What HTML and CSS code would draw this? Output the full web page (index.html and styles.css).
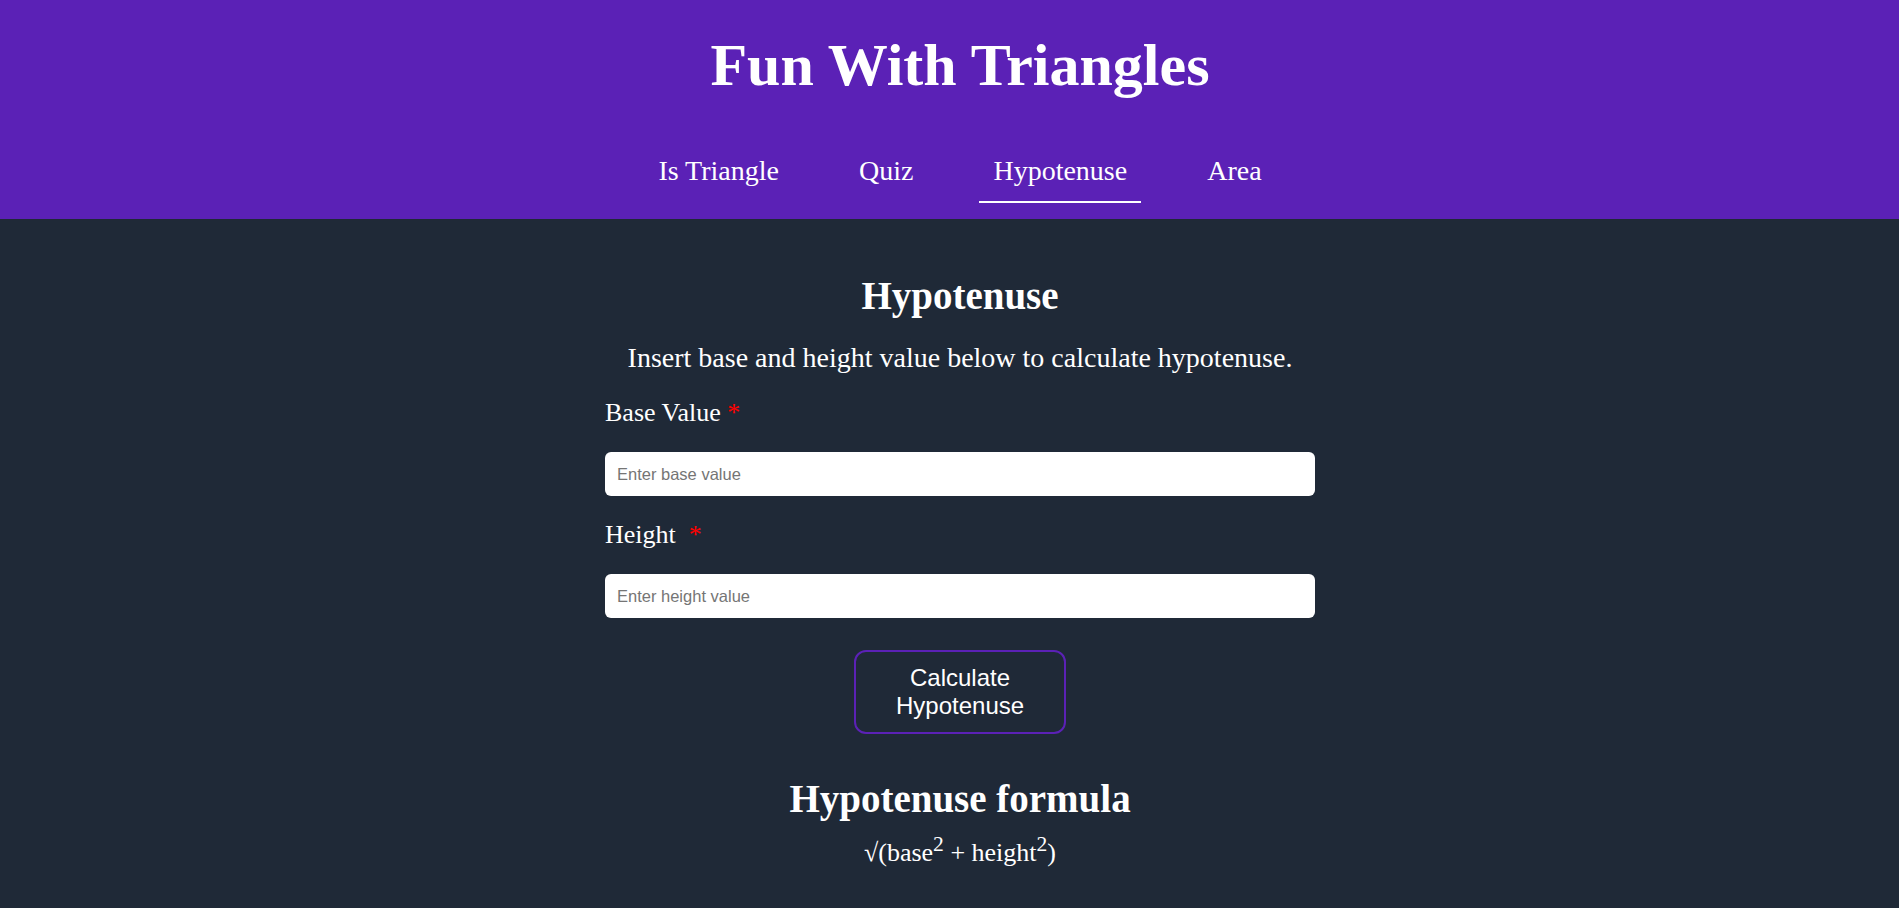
FILE: index.html
```html
<!DOCTYPE html>
<html lang="en">
<head>
<meta charset="utf-8">
<title>Fun With Triangles</title>
<link rel="stylesheet" href="styles.css">
</head>
<body>
<header class="site-header">
  <div class="header-inner">
    <h1 class="site-title">Fun With Triangles</h1>
    <nav class="nav">
      <a class="nav-link" href="#">Is Triangle</a>
      <a class="nav-link" href="#">Quiz</a>
      <a class="nav-link active" href="#">Hypotenuse</a>
      <a class="nav-link" href="#">Area</a>
    </nav>
  </div>
</header>
<main class="main">
  <section class="panel">
    <h2 class="heading">Hypotenuse</h2>
    <p class="intro">Insert base and height value below to calculate hypotenuse.</p>
    <form class="form">
      <label class="label" for="base">Base Value <span class="req">*</span></label>
      <input class="field" id="base" type="number" placeholder="Enter base value">
      <label class="label label-2" for="height">Height&nbsp; <span class="req">*</span></label>
      <input class="field" id="height" type="number" placeholder="Enter height value">
      <button class="btn" type="button">Calculate Hypotenuse</button>
    </form>
    <h2 class="heading formula-heading">Hypotenuse formula</h2>
    <p class="formula">√(base<sup>2</sup> + height<sup>2</sup>)</p>
  </section>
</main>
</body>
</html>
```

FILE: styles.css
```css
* { box-sizing: border-box; }

html, body {
  margin: 0;
  padding: 0;
}

body {
  background: #1f2937;
  color: #ffffff;
  font-family: "Liberation Serif", "Times New Roman", serif;
  min-height: 908px;
}

.site-header {
  background: #5b21b6;
}

.header-inner {
  padding: 31px 0 16px 21px;
  display: flex;
  flex-direction: column;
  align-items: center;
}

.site-title {
  margin: 0 0 47px;
  font-size: 60px;
  line-height: 69px;
  font-weight: 700;
  color: #ffffff;
}

.nav {
  display: flex;
  gap: 52px;
}

.nav-link {
  color: #ffffff;
  text-decoration: none;
  font-size: 28px;
  line-height: 32px;
  padding: 8px 14px 14px;
  border-bottom: 2px solid transparent;
}

.nav-link.active {
  border-bottom-color: #ffffff;
}

.main {
  padding: 54px 0 0 21px;
  display: flex;
  justify-content: center;
}

.panel {
  width: 710px;
  display: flex;
  flex-direction: column;
  align-items: center;
}

.heading {
  margin: 0;
  font-size: 39px;
  line-height: 45px;
  font-weight: 700;
}

.intro {
  margin: 24px 0 0;
  font-size: 28px;
  line-height: 32px;
  white-space: nowrap;
}

.form {
  width: 100%;
  display: flex;
  flex-direction: column;
  align-items: stretch;
  margin-top: 24px;
}

.label {
  font-size: 26px;
  line-height: 30px;
  margin-bottom: 24px;
}

.label-2 {
  margin-top: 24px;
}

.req {
  color: #ff0000;
}

.field {
  height: 44px;
  border: none;
  border-radius: 6px;
  background: #ffffff;
  padding: 0 12px;
  font-family: "Liberation Sans", Arial, sans-serif;
  font-size: 16.5px;
  color: #111111;
  outline: none;
}

.field::placeholder {
  color: #757575;
}

.btn {
  align-self: center;
  margin-top: 32px;
  width: 212px;
  height: 84px;
  padding: 0 40px;
  background: transparent;
  border: 2px solid #5b21b6;
  border-radius: 12px;
  color: #ffffff;
  font-family: "Liberation Sans", Arial, sans-serif;
  font-size: 24px;
  line-height: 28px;
  cursor: pointer;
}

.formula-heading {
  margin-top: 42px;
}

.formula {
  margin: 17px 0 0;
  font-size: 26px;
  line-height: 30px;
}

.formula sup {
  line-height: 0;
  font-size: 0.83em;
}
```
